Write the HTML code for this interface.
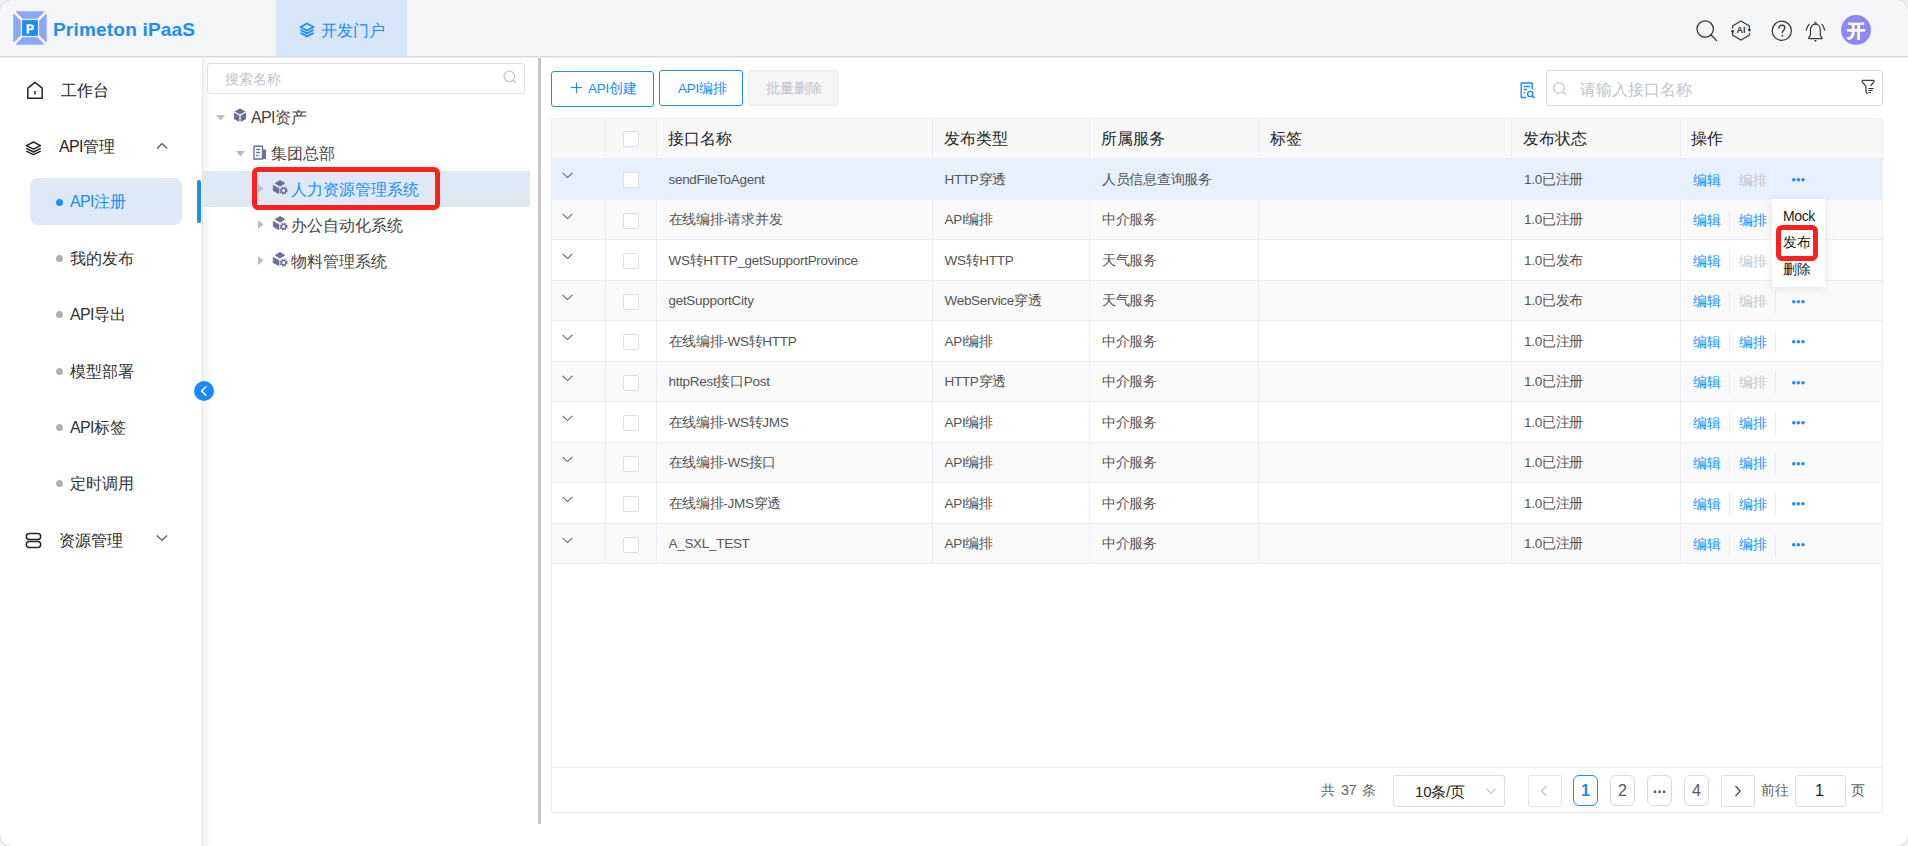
<!DOCTYPE html>
<html><head><meta charset="utf-8">
<style>
*{box-sizing:border-box;margin:0;padding:0}
html,body{width:1908px;height:846px;overflow:hidden;background:#fff}
body{font-family:"Liberation Sans",sans-serif;position:relative;color:#303133}
.a{position:absolute}
.t{position:absolute;white-space:nowrap}
svg{position:absolute;overflow:visible}
/* header */
#hdr{left:0;top:0;width:1908px;height:57px;background:#f4f5f7;border-bottom:1px solid #d9d9d9}
#side{left:0;top:57px;width:203px;height:789px;background:#fff;border-right:1px solid #e8e8e8}
.mi{font-size:16px;color:#262626;line-height:20px}
.sub{font-size:16px;color:#333;line-height:20px}
.dot{position:absolute;width:7px;height:7px;border-radius:50%;background:#b0b0b0}
.tr{font-size:16px;color:#454545;line-height:20px}
.th{font-size:16px;color:#262626;line-height:20px}
.td{font-size:13.5px;color:#555;line-height:18px;letter-spacing:-0.3px}
.hl{position:absolute;height:1px;background:#ebeef5}
.vl{position:absolute;width:1px;background:#ebeef5}
.cb{position:absolute;width:16px;height:16px;border:1px solid #dcdfe6;border-radius:2px;background:#fff}
.op{font-size:13.5px;color:#1890ff;line-height:18px}
.opd{color:#c8c8c8}
.sep{position:absolute;width:1px;height:22px;background:#ececec}
.pg{position:absolute;top:775px;width:25px;height:31px;border:1px solid #d9d9d9;border-radius:6px;font-size:16px;color:#555;text-align:center;line-height:29px;background:#fff}
</style></head><body>
<div id="hdr" class="a"></div>
<div id="side" class="a"></div>


<!-- SIDEBAR -->
<svg style="left:26px;top:81px" width="18" height="19" viewBox="0 0 18 19">
  <path d="M1.8 7.2L9 1.4 16.2 7.2V17.2H1.8z" fill="none" stroke="#262626" stroke-width="1.5" stroke-linejoin="round"/>
  <path d="M9 10V13.4" stroke="#262626" stroke-width="1.5"/>
</svg>
<div class="t mi" style="left:61px;top:81px">工作台</div>
<svg style="left:25px;top:141px" width="17" height="14" viewBox="0 0 17 14">
  <path d="M8.5 1L15.5 4.6 8.5 8.2 1.5 4.6z" fill="none" stroke="#262626" stroke-width="1.5" stroke-linejoin="round"/>
  <path d="M1.8 7.6L8.5 11 15.2 7.6M1.8 10.4L8.5 13.6 15.2 10.4" fill="none" stroke="#262626" stroke-width="1.5" stroke-linecap="round" stroke-linejoin="round"/>
</svg>
<div class="t mi" style="left:59px;top:137px"><span style="letter-spacing:-0.7px">API</span>管理</div>
<svg style="left:156px;top:142px" width="12" height="8" viewBox="0 0 12 8">
  <path d="M1 6.5L6 1.5 11 6.5" fill="none" stroke="#555" stroke-width="1.2"/>
</svg>
<div class="a" style="left:30px;top:178px;width:152px;height:47px;border-radius:8px;background:#dfe9f6"></div>
<div class="a" style="left:197px;top:180px;width:4px;height:43px;border-radius:2px;background:#1a8cff"></div>
<div class="dot" style="left:56px;top:199px;background:#1a8cff"></div>
<div class="t sub" style="left:70px;top:192px;color:#1a8cff"><span style="letter-spacing:-0.7px">API</span>注册</div>
<div class="dot" style="left:56px;top:255px"></div>
<div class="t sub" style="left:70px;top:249px">我的发布</div>
<div class="dot" style="left:56px;top:311px"></div>
<div class="t sub" style="left:70px;top:305px"><span style="letter-spacing:-0.7px">API</span>导出</div>
<div class="dot" style="left:56px;top:368px"></div>
<div class="t sub" style="left:70px;top:362px">模型部署</div>
<div class="dot" style="left:56px;top:424px"></div>
<div class="t sub" style="left:70px;top:418px"><span style="letter-spacing:-0.7px">API</span>标签</div>
<div class="dot" style="left:56px;top:480px"></div>
<div class="t sub" style="left:70px;top:474px">定时调用</div>
<svg style="left:25px;top:532px" width="17" height="17" viewBox="0 0 17 17">
  <rect x="1.3" y="1.5" width="14.4" height="6" rx="3" fill="none" stroke="#262626" stroke-width="1.5"/>
  <rect x="1.3" y="9.5" width="14.4" height="6" rx="3" fill="none" stroke="#262626" stroke-width="1.5"/>
</svg>
<div class="t mi" style="left:59px;top:531px">资源管理</div>
<svg style="left:156px;top:534px" width="12" height="8" viewBox="0 0 12 8">
  <path d="M1 1.5L6 6.5 11 1.5" fill="none" stroke="#555" stroke-width="1.2"/>
</svg>



<!-- TREE -->
<div class="a" style="left:203px;top:57px;width:8px;height:789px;background:linear-gradient(90deg,#f3f3f3,#fff)"></div>
<div class="a" style="left:207px;top:63px;width:318px;height:31px;border:1px solid #dcdfe6;border-radius:3px;background:#fff"></div>
<div class="t" style="left:225px;top:71px;font-size:14px;line-height:17px;color:#c0c4cc">搜索名称</div>
<svg style="left:503px;top:70px" width="14" height="14" viewBox="0 0 14 14">
  <circle cx="6.3" cy="6.3" r="5.3" fill="none" stroke="#b8bcc4" stroke-width="1.1"/>
  <path d="M10.2 10.2L12.6 12.6" stroke="#b8bcc4" stroke-width="1.1" stroke-linecap="round"/>
</svg>
<svg style="left:216px;top:115px" width="9" height="6" viewBox="0 0 9 6"><path d="M0 0H9L4.5 5.5z" fill="#b9bdc7"/></svg>
<svg style="left:233px;top:108px" width="14" height="14" viewBox="0 0 14 14"><path d="M7 0.6L12.6 3.6 7 6.6 1.4 3.6z M0.9 4.6L6.4 7.6V14L0.9 11z M13.1 4.6L7.6 7.6V14L13.1 11z" fill="#6b7094"/></svg>
<div class="t tr" style="left:251px;top:108px"><span style="letter-spacing:-0.7px">API</span>资产</div>
<svg style="left:236px;top:151px" width="9" height="6" viewBox="0 0 9 6"><path d="M0 0H9L4.5 5.5z" fill="#b9bdc7"/></svg>
<svg style="left:253px;top:145px" width="14" height="15" viewBox="0 0 14 15">
  <path d="M1 1.2H9.5V14H1z" fill="none" stroke="#6b7094" stroke-width="1.4"/>
  <path d="M9.8 4.5H13V14H9.8z" fill="#6b7094"/>
  <path d="M3.2 4.5H7M3.2 7.5H7M3.2 10.5H5.5" stroke="#6b7094" stroke-width="1.3"/>
</svg>
<div class="t tr" style="left:271px;top:144px">集团总部</div>
<div class="a" style="left:203px;top:171px;width:327px;height:36px;background:#dfe9f6"></div>
<svg style="left:258px;top:184px" width="6" height="9" viewBox="0 0 6 9"><path d="M0 0V9L5.5 4.5z" fill="#b9bdc7"/></svg>
<svg style="left:272px;top:180px" width="15" height="14" viewBox="0 0 15 14">
  <path d="M8 0.4L12.9 3.3 8 6.2 3.1 3.3z" fill="#6b7094" stroke="#6b7094" stroke-width="0.8" stroke-linejoin="round"/>
  <path d="M1.2 5.3L7 8.5V13.8L1.2 10.7z" fill="#6b7094" stroke="#6b7094" stroke-width="0.6" stroke-linejoin="round"/>
  <circle cx="11.6" cy="10.6" r="3.1" fill="none" stroke="#6b7094" stroke-width="1.8" stroke-dasharray="1.5 0.95"/>
  <circle cx="11.6" cy="10.6" r="2.2" fill="none" stroke="#6b7094" stroke-width="1.3"/>
</svg>
<div class="t tr" style="left:291px;top:180px;color:#1a8cff">人力资源管理系统</div>
<div class="a" style="left:252px;top:167px;width:188px;height:43px;border:5px solid #ff1f1f;border-radius:6px"></div>
<svg style="left:258px;top:220px" width="6" height="9" viewBox="0 0 6 9"><path d="M0 0V9L5.5 4.5z" fill="#b9bdc7"/></svg>
<svg style="left:272px;top:216px" width="15" height="14" viewBox="0 0 15 14">
  <path d="M8 0.4L12.9 3.3 8 6.2 3.1 3.3z" fill="#6b7094" stroke="#6b7094" stroke-width="0.8" stroke-linejoin="round"/>
  <path d="M1.2 5.3L7 8.5V13.8L1.2 10.7z" fill="#6b7094" stroke="#6b7094" stroke-width="0.6" stroke-linejoin="round"/>
  <circle cx="11.6" cy="10.6" r="3.1" fill="none" stroke="#6b7094" stroke-width="1.8" stroke-dasharray="1.5 0.95"/>
  <circle cx="11.6" cy="10.6" r="2.2" fill="none" stroke="#6b7094" stroke-width="1.3"/>
</svg>
<div class="t tr" style="left:291px;top:216px">办公自动化系统</div>
<svg style="left:258px;top:256px" width="6" height="9" viewBox="0 0 6 9"><path d="M0 0V9L5.5 4.5z" fill="#b9bdc7"/></svg>
<svg style="left:272px;top:252px" width="15" height="14" viewBox="0 0 15 14">
  <path d="M8 0.4L12.9 3.3 8 6.2 3.1 3.3z" fill="#6b7094" stroke="#6b7094" stroke-width="0.8" stroke-linejoin="round"/>
  <path d="M1.2 5.3L7 8.5V13.8L1.2 10.7z" fill="#6b7094" stroke="#6b7094" stroke-width="0.6" stroke-linejoin="round"/>
  <circle cx="11.6" cy="10.6" r="3.1" fill="none" stroke="#6b7094" stroke-width="1.8" stroke-dasharray="1.5 0.95"/>
  <circle cx="11.6" cy="10.6" r="2.2" fill="none" stroke="#6b7094" stroke-width="1.3"/>
</svg>
<div class="t tr" style="left:291px;top:252px">物料管理系统</div>
<div class="a" style="left:538px;top:58px;width:3px;height:766px;background:#c6c6c6"></div>


<!-- MAIN -->
<div class="a" style="left:551px;top:71px;width:103px;height:36px;border:1px solid #1a8cff;border-radius:3px;background:#fff"></div>
<svg style="left:571px;top:82px" width="11" height="11" viewBox="0 0 11 11"><path d="M5.5 0.5V11M0 5.5H11" stroke="#1a8cff" stroke-width="1.1"/></svg>
<div class="t" style="left:588px;top:80px;font-size:13.5px;line-height:17px;letter-spacing:-0.2px;color:#1a8cff">API创建</div>
<div class="a" style="left:659px;top:70px;width:84px;height:36px;border:1px solid #1a8cff;border-radius:3px;background:#fff"></div>
<div class="t" style="left:678px;top:80px;font-size:13.5px;line-height:17px;letter-spacing:-0.2px;color:#1a8cff">API编排</div>
<div class="a" style="left:748px;top:70px;width:90px;height:36px;border:1px solid #ececec;border-radius:3px;background:#f5f5f5"></div>
<div class="t" style="left:766px;top:80px;font-size:13.5px;line-height:17px;color:#c0c4cc">批量删除</div>
<svg style="left:1520px;top:82px" width="15" height="17" viewBox="0 0 15 17">
  <path d="M6.5 15.5H1.2V1H12.2V7.5" fill="none" stroke="#1a8cff" stroke-width="1.4" stroke-linejoin="round"/>
  <path d="M3.6 4.5H9.8M3.6 7.5H7M3.6 10.5H5.2" stroke="#1a8cff" stroke-width="1.4"/>
  <circle cx="10.2" cy="12" r="2.6" fill="none" stroke="#1a8cff" stroke-width="1.4"/>
  <path d="M12.1 13.9L14 15.8" stroke="#1a8cff" stroke-width="1.5" stroke-linecap="round"/>
</svg>
<div class="a" style="left:1546px;top:70px;width:337px;height:36px;border:1px solid #dcdcdc;border-radius:3px;background:#fff"></div>
<svg style="left:1553px;top:82px" width="14" height="13" viewBox="0 0 14 13">
  <circle cx="6" cy="6" r="5.2" fill="none" stroke="#c0c4cc" stroke-width="1.2"/>
  <path d="M9.8 9.8L12.6 12.4" stroke="#c0c4cc" stroke-width="1.2" stroke-linecap="round"/>
</svg>
<div class="t" style="left:1580px;top:80px;font-size:16px;line-height:19px;color:#c0c4cc">请输入接口名称</div>
<svg style="left:1860px;top:79px" width="16" height="17" viewBox="0 0 16 17">
  <path d="M3 1.3H13.2c.8 0 1.2.7.8 1.3L10.9 6.6M3 1.3C2.2 1.3 1.8 2 2.2 2.6L5.3 6.6C5.8 7.3 6 8 6 9V12.3C6 13.2 6.5 13.9 7.2 14.6" fill="none" stroke="#3c3c3c" stroke-width="1.3" stroke-linecap="round" stroke-linejoin="round"/>
  <path d="M8.4 9.5H13.8M8.4 11.5H12.6M8.4 13.5H11" stroke="#3c3c3c" stroke-width="1.2"/>
</svg>

<div class="a" style="left:551px;top:118px;width:1332px;height:40px;background:#f8f8f9"></div>
<div class="a" style="left:551px;top:159px;width:1332px;height:40px;background:#e8effd"></div>
<div class="a" style="left:551px;top:200px;width:1332px;height:39px;background:#fafafa"></div>
<div class="a" style="left:551px;top:281px;width:1332px;height:39px;background:#fafafa"></div>
<div class="a" style="left:551px;top:362px;width:1332px;height:39px;background:#fafafa"></div>
<div class="a" style="left:551px;top:443px;width:1332px;height:39px;background:#fafafa"></div>
<div class="a" style="left:551px;top:524px;width:1332px;height:39px;background:#fafafa"></div>
<div class="hl" style="left:551px;top:158px;width:1332px"></div>
<div class="hl" style="left:551px;top:199px;width:1332px"></div>
<div class="hl" style="left:551px;top:239px;width:1332px"></div>
<div class="hl" style="left:551px;top:280px;width:1332px"></div>
<div class="hl" style="left:551px;top:320px;width:1332px"></div>
<div class="hl" style="left:551px;top:361px;width:1332px"></div>
<div class="hl" style="left:551px;top:401px;width:1332px"></div>
<div class="hl" style="left:551px;top:442px;width:1332px"></div>
<div class="hl" style="left:551px;top:482px;width:1332px"></div>
<div class="hl" style="left:551px;top:523px;width:1332px"></div>
<div class="hl" style="left:551px;top:563px;width:1332px"></div>
<div class="hl" style="left:551px;top:118px;width:1332px"></div>
<div class="hl" style="left:551px;top:767px;width:1332px"></div>
<div class="hl" style="left:551px;top:812px;width:1332px"></div>
<div class="vl" style="left:605px;top:118px;height:445px"></div>
<div class="vl" style="left:656px;top:118px;height:445px"></div>
<div class="vl" style="left:932px;top:118px;height:445px"></div>
<div class="vl" style="left:1089px;top:118px;height:445px"></div>
<div class="vl" style="left:1258px;top:118px;height:445px"></div>
<div class="vl" style="left:1511px;top:118px;height:445px"></div>
<div class="vl" style="left:1680px;top:118px;height:445px"></div>
<div class="vl" style="left:551px;top:118px;height:695px"></div>
<div class="vl" style="left:1882px;top:118px;height:695px"></div>
<div class="cb" style="left:623px;top:131px"></div>
<div class="t th" style="left:668px;top:129px">接口名称</div>
<div class="t th" style="left:944px;top:129px">发布类型</div>
<div class="t th" style="left:1101px;top:129px">所属服务</div>
<div class="t th" style="left:1270px;top:129px">标签</div>
<div class="t th" style="left:1523px;top:129px">发布状态</div>
<div class="t th" style="left:1691px;top:129px">操作</div>
<svg style="left:562px;top:172.0px" width="11" height="7" viewBox="0 0 11 7"><path d="M0.6 0.8L5.5 5.6 10.4 0.8" fill="none" stroke="#666" stroke-width="1.1"/></svg>
<div class="cb" style="left:623px;top:172.0px"></div>
<div class="t td" style="left:668.5px;top:170.5px">sendFileToAgent</div>
<div class="t td" style="left:944.5px;top:170.5px">HTTP穿透</div>
<div class="t td" style="left:1102px;top:170.5px">人员信息查询服务</div>
<div class="t td" style="left:1524px;top:170.5px">1.0已注册</div>
<div class="t op" style="left:1693px;top:171.5px">编辑</div>
<div class="sep" style="left:1729px;top:169.0px"></div>
<div class="t op opd" style="left:1739px;top:171.5px">编排</div>
<div class="sep" style="left:1775px;top:169.0px"></div>
<svg style="left:1792px;top:178.0px" width="14" height="4" viewBox="0 0 14 4"><circle cx="1.75" cy="1.75" r="1.75" fill="#1a8cff"/><circle cx="6.35" cy="1.75" r="1.75" fill="#1a8cff"/><circle cx="10.95" cy="1.75" r="1.75" fill="#1a8cff"/></svg>
<svg style="left:562px;top:212.5px" width="11" height="7" viewBox="0 0 11 7"><path d="M0.6 0.8L5.5 5.6 10.4 0.8" fill="none" stroke="#666" stroke-width="1.1"/></svg>
<div class="cb" style="left:623px;top:212.5px"></div>
<div class="t td" style="left:668.5px;top:211.0px">在线编排-请求并发</div>
<div class="t td" style="left:944.5px;top:211.0px">API编排</div>
<div class="t td" style="left:1102px;top:211.0px">中介服务</div>
<div class="t td" style="left:1524px;top:211.0px">1.0已注册</div>
<div class="t op" style="left:1693px;top:212.0px">编辑</div>
<div class="sep" style="left:1729px;top:209.5px"></div>
<div class="t op" style="left:1739px;top:212.0px">编排</div>
<div class="sep" style="left:1775px;top:209.5px"></div>
<svg style="left:1792px;top:218.5px" width="14" height="4" viewBox="0 0 14 4"><circle cx="1.75" cy="1.75" r="1.75" fill="#1a8cff"/><circle cx="6.35" cy="1.75" r="1.75" fill="#1a8cff"/><circle cx="10.95" cy="1.75" r="1.75" fill="#1a8cff"/></svg>
<svg style="left:562px;top:253.0px" width="11" height="7" viewBox="0 0 11 7"><path d="M0.6 0.8L5.5 5.6 10.4 0.8" fill="none" stroke="#666" stroke-width="1.1"/></svg>
<div class="cb" style="left:623px;top:253.0px"></div>
<div class="t td" style="left:668.5px;top:251.5px">WS转HTTP_getSupportProvince</div>
<div class="t td" style="left:944.5px;top:251.5px">WS转HTTP</div>
<div class="t td" style="left:1102px;top:251.5px">天气服务</div>
<div class="t td" style="left:1524px;top:251.5px">1.0已发布</div>
<div class="t op" style="left:1693px;top:252.5px">编辑</div>
<div class="sep" style="left:1729px;top:250.0px"></div>
<div class="t op opd" style="left:1739px;top:252.5px">编排</div>
<div class="sep" style="left:1775px;top:250.0px"></div>
<svg style="left:1792px;top:259.0px" width="14" height="4" viewBox="0 0 14 4"><circle cx="1.75" cy="1.75" r="1.75" fill="#1a8cff"/><circle cx="6.35" cy="1.75" r="1.75" fill="#1a8cff"/><circle cx="10.95" cy="1.75" r="1.75" fill="#1a8cff"/></svg>
<svg style="left:562px;top:293.5px" width="11" height="7" viewBox="0 0 11 7"><path d="M0.6 0.8L5.5 5.6 10.4 0.8" fill="none" stroke="#666" stroke-width="1.1"/></svg>
<div class="cb" style="left:623px;top:293.5px"></div>
<div class="t td" style="left:668.5px;top:292.0px">getSupportCity</div>
<div class="t td" style="left:944.5px;top:292.0px">WebService穿透</div>
<div class="t td" style="left:1102px;top:292.0px">天气服务</div>
<div class="t td" style="left:1524px;top:292.0px">1.0已发布</div>
<div class="t op" style="left:1693px;top:293.0px">编辑</div>
<div class="sep" style="left:1729px;top:290.5px"></div>
<div class="t op opd" style="left:1739px;top:293.0px">编排</div>
<div class="sep" style="left:1775px;top:290.5px"></div>
<svg style="left:1792px;top:299.5px" width="14" height="4" viewBox="0 0 14 4"><circle cx="1.75" cy="1.75" r="1.75" fill="#1a8cff"/><circle cx="6.35" cy="1.75" r="1.75" fill="#1a8cff"/><circle cx="10.95" cy="1.75" r="1.75" fill="#1a8cff"/></svg>
<svg style="left:562px;top:334.0px" width="11" height="7" viewBox="0 0 11 7"><path d="M0.6 0.8L5.5 5.6 10.4 0.8" fill="none" stroke="#666" stroke-width="1.1"/></svg>
<div class="cb" style="left:623px;top:334.0px"></div>
<div class="t td" style="left:668.5px;top:332.5px">在线编排-WS转HTTP</div>
<div class="t td" style="left:944.5px;top:332.5px">API编排</div>
<div class="t td" style="left:1102px;top:332.5px">中介服务</div>
<div class="t td" style="left:1524px;top:332.5px">1.0已注册</div>
<div class="t op" style="left:1693px;top:333.5px">编辑</div>
<div class="sep" style="left:1729px;top:331.0px"></div>
<div class="t op" style="left:1739px;top:333.5px">编排</div>
<div class="sep" style="left:1775px;top:331.0px"></div>
<svg style="left:1792px;top:340.0px" width="14" height="4" viewBox="0 0 14 4"><circle cx="1.75" cy="1.75" r="1.75" fill="#1a8cff"/><circle cx="6.35" cy="1.75" r="1.75" fill="#1a8cff"/><circle cx="10.95" cy="1.75" r="1.75" fill="#1a8cff"/></svg>
<svg style="left:562px;top:374.5px" width="11" height="7" viewBox="0 0 11 7"><path d="M0.6 0.8L5.5 5.6 10.4 0.8" fill="none" stroke="#666" stroke-width="1.1"/></svg>
<div class="cb" style="left:623px;top:374.5px"></div>
<div class="t td" style="left:668.5px;top:373.0px">httpRest接口Post</div>
<div class="t td" style="left:944.5px;top:373.0px">HTTP穿透</div>
<div class="t td" style="left:1102px;top:373.0px">中介服务</div>
<div class="t td" style="left:1524px;top:373.0px">1.0已注册</div>
<div class="t op" style="left:1693px;top:374.0px">编辑</div>
<div class="sep" style="left:1729px;top:371.5px"></div>
<div class="t op opd" style="left:1739px;top:374.0px">编排</div>
<div class="sep" style="left:1775px;top:371.5px"></div>
<svg style="left:1792px;top:380.5px" width="14" height="4" viewBox="0 0 14 4"><circle cx="1.75" cy="1.75" r="1.75" fill="#1a8cff"/><circle cx="6.35" cy="1.75" r="1.75" fill="#1a8cff"/><circle cx="10.95" cy="1.75" r="1.75" fill="#1a8cff"/></svg>
<svg style="left:562px;top:415.0px" width="11" height="7" viewBox="0 0 11 7"><path d="M0.6 0.8L5.5 5.6 10.4 0.8" fill="none" stroke="#666" stroke-width="1.1"/></svg>
<div class="cb" style="left:623px;top:415.0px"></div>
<div class="t td" style="left:668.5px;top:413.5px">在线编排-WS转JMS</div>
<div class="t td" style="left:944.5px;top:413.5px">API编排</div>
<div class="t td" style="left:1102px;top:413.5px">中介服务</div>
<div class="t td" style="left:1524px;top:413.5px">1.0已注册</div>
<div class="t op" style="left:1693px;top:414.5px">编辑</div>
<div class="sep" style="left:1729px;top:412.0px"></div>
<div class="t op" style="left:1739px;top:414.5px">编排</div>
<div class="sep" style="left:1775px;top:412.0px"></div>
<svg style="left:1792px;top:421.0px" width="14" height="4" viewBox="0 0 14 4"><circle cx="1.75" cy="1.75" r="1.75" fill="#1a8cff"/><circle cx="6.35" cy="1.75" r="1.75" fill="#1a8cff"/><circle cx="10.95" cy="1.75" r="1.75" fill="#1a8cff"/></svg>
<svg style="left:562px;top:455.5px" width="11" height="7" viewBox="0 0 11 7"><path d="M0.6 0.8L5.5 5.6 10.4 0.8" fill="none" stroke="#666" stroke-width="1.1"/></svg>
<div class="cb" style="left:623px;top:455.5px"></div>
<div class="t td" style="left:668.5px;top:454.0px">在线编排-WS接口</div>
<div class="t td" style="left:944.5px;top:454.0px">API编排</div>
<div class="t td" style="left:1102px;top:454.0px">中介服务</div>
<div class="t td" style="left:1524px;top:454.0px">1.0已注册</div>
<div class="t op" style="left:1693px;top:455.0px">编辑</div>
<div class="sep" style="left:1729px;top:452.5px"></div>
<div class="t op" style="left:1739px;top:455.0px">编排</div>
<div class="sep" style="left:1775px;top:452.5px"></div>
<svg style="left:1792px;top:461.5px" width="14" height="4" viewBox="0 0 14 4"><circle cx="1.75" cy="1.75" r="1.75" fill="#1a8cff"/><circle cx="6.35" cy="1.75" r="1.75" fill="#1a8cff"/><circle cx="10.95" cy="1.75" r="1.75" fill="#1a8cff"/></svg>
<svg style="left:562px;top:496.0px" width="11" height="7" viewBox="0 0 11 7"><path d="M0.6 0.8L5.5 5.6 10.4 0.8" fill="none" stroke="#666" stroke-width="1.1"/></svg>
<div class="cb" style="left:623px;top:496.0px"></div>
<div class="t td" style="left:668.5px;top:494.5px">在线编排-JMS穿透</div>
<div class="t td" style="left:944.5px;top:494.5px">API编排</div>
<div class="t td" style="left:1102px;top:494.5px">中介服务</div>
<div class="t td" style="left:1524px;top:494.5px">1.0已注册</div>
<div class="t op" style="left:1693px;top:495.5px">编辑</div>
<div class="sep" style="left:1729px;top:493.0px"></div>
<div class="t op" style="left:1739px;top:495.5px">编排</div>
<div class="sep" style="left:1775px;top:493.0px"></div>
<svg style="left:1792px;top:502.0px" width="14" height="4" viewBox="0 0 14 4"><circle cx="1.75" cy="1.75" r="1.75" fill="#1a8cff"/><circle cx="6.35" cy="1.75" r="1.75" fill="#1a8cff"/><circle cx="10.95" cy="1.75" r="1.75" fill="#1a8cff"/></svg>
<svg style="left:562px;top:536.5px" width="11" height="7" viewBox="0 0 11 7"><path d="M0.6 0.8L5.5 5.6 10.4 0.8" fill="none" stroke="#666" stroke-width="1.1"/></svg>
<div class="cb" style="left:623px;top:536.5px"></div>
<div class="t td" style="left:668.5px;top:535.0px">A_SXL_TEST</div>
<div class="t td" style="left:944.5px;top:535.0px">API编排</div>
<div class="t td" style="left:1102px;top:535.0px">中介服务</div>
<div class="t td" style="left:1524px;top:535.0px">1.0已注册</div>
<div class="t op" style="left:1693px;top:536.0px">编辑</div>
<div class="sep" style="left:1729px;top:533.5px"></div>
<div class="t op" style="left:1739px;top:536.0px">编排</div>
<div class="sep" style="left:1775px;top:533.5px"></div>
<svg style="left:1792px;top:542.5px" width="14" height="4" viewBox="0 0 14 4"><circle cx="1.75" cy="1.75" r="1.75" fill="#1a8cff"/><circle cx="6.35" cy="1.75" r="1.75" fill="#1a8cff"/><circle cx="10.95" cy="1.75" r="1.75" fill="#1a8cff"/></svg>

<div class="a" style="left:1772px;top:199px;width:53px;height:88px;background:#fff;box-shadow:0 2px 10px rgba(0,0,0,0.10)"></div>
<div class="t" style="left:1783px;top:208px;font-size:14px;line-height:17px;color:#1a1a1a;letter-spacing:-0.4px">Mock</div>
<div class="t" style="left:1783px;top:234px;font-size:14px;line-height:17px;color:#1a1a1a">发布</div>
<div class="t" style="left:1783px;top:261px;font-size:14px;line-height:17px;color:#1a1a1a">删除</div>
<div class="a" style="left:1776px;top:225px;width:42px;height:35.5px;border:5px solid #ff1f1f;border-radius:6px"></div>


<div class="t" style="left:1321px;top:782px;font-size:14px;line-height:17px;color:#606266;word-spacing:2px">共 37 条</div>
<div class="a" style="left:1393px;top:775px;width:112px;height:32px;border:1px solid #dcdfe6;border-radius:3px;background:#fff"></div>
<div class="t" style="left:1415px;top:782px;font-size:15px;line-height:19px;color:#1f1f1f;letter-spacing:-0.2px">10条/页</div>
<svg style="left:1486px;top:788px" width="10" height="7" viewBox="0 0 10 7"><path d="M0.6 0.8L5 5.4 9.4 0.8" fill="none" stroke="#c0c4cc" stroke-width="1.1"/></svg>
<div class="a" style="left:1528px;top:775px;width:34px;height:32px;border:1px solid #e6e6e6;border-radius:2px;background:#fff"></div>
<svg style="left:1540px;top:785px" width="8" height="12" viewBox="0 0 8 12"><path d="M6.5 1L1.8 6 6.5 11" fill="none" stroke="#c8c8c8" stroke-width="1.2"/></svg>
<div class="pg" style="left:1573px;border-color:#1a8cff;color:#1a8cff;font-weight:bold">1</div>
<div class="pg" style="left:1610px">2</div>
<div class="pg" style="left:1647px;font-weight:bold;line-height:24px">...</div>
<div class="pg" style="left:1684px">4</div>
<div class="a" style="left:1721px;top:775px;width:34px;height:32px;border:1px solid #dcdfe6;border-radius:2px;background:#fff"></div>
<svg style="left:1734px;top:785px" width="8" height="12" viewBox="0 0 8 12"><path d="M1.5 1L6.2 6 1.5 11" fill="none" stroke="#444" stroke-width="1.2"/></svg>
<div class="t" style="left:1761px;top:782px;font-size:14px;line-height:17px;color:#606266">前往</div>
<div class="a" style="left:1795px;top:775px;width:51px;height:32px;border:1px solid #dcdfe6;border-radius:3px;background:#fff"></div>
<div class="t" style="left:1815px;top:781px;font-size:16px;line-height:19px;color:#1f1f1f">1</div>
<div class="t" style="left:1851px;top:782px;font-size:14px;line-height:17px;color:#606266">页</div>

<!-- HEADER -->
<div class="a" style="left:0;top:57px;width:1908px;height:1px;background:#eceef3"></div>
<svg style="left:13px;top:11px" width="34" height="34" viewBox="0 0 34 34">
  <rect x="0.3" y="0.3" width="33.4" height="33.4" rx="4.5" fill="#8aa6f7"/>
  <path d="M0 0L34 34M34 0L0 34" stroke="#f4f5f7" stroke-width="2.6"/>
  <rect x="7.8" y="7.8" width="18.4" height="18.4" fill="#f4f5f7"/>
  <rect x="9.1" y="9.1" width="15.8" height="15.8" fill="#1a8cff"/>
  <path d="M13.6 22.4V13.3h4c2.2 0 3.5 1.1 3.5 2.95s-1.3 2.95-3.5 2.95h-1.5v3.2z M16.1 15.2v2.2h1.3c.75 0 1.15-.4 1.15-1.1s-.4-1.1-1.15-1.1z" fill="#fff" fill-rule="evenodd"/>
</svg>
<div class="t" style="left:53px;top:19px;font-size:19px;font-weight:bold;color:#1a8cff;line-height:22px;letter-spacing:0.2px">Primeton iPaaS</div>
<div class="a" style="left:276px;top:0;width:131px;height:56px;background:#d6e6f8"></div>
<svg style="left:299px;top:22px" width="16" height="16" viewBox="0 0 16 16">
  <path d="M8 1.5L14.5 5 8 8.5 1.5 5z" fill="none" stroke="#1a8cff" stroke-width="1.8" stroke-linejoin="round"/>
  <path d="M2 8.2L8 11.4 14 8.2M2 11.2L8 14.4 14 11.2" fill="none" stroke="#1a8cff" stroke-width="1.8" stroke-linecap="round" stroke-linejoin="round"/>
</svg>
<div class="t" style="left:321px;top:21px;font-size:16px;color:#1a8cff;line-height:20px">开发门户</div>
<!-- right icons -->
<svg style="left:1696px;top:20px" width="22" height="22" viewBox="0 0 22 22">
  <circle cx="9.2" cy="9" r="8.2" fill="none" stroke="#333" stroke-width="1.25"/>
  <path d="M15.1 15L20.6 20.6" stroke="#333" stroke-width="1.35" stroke-linecap="round"/>
</svg>
<svg style="left:1731px;top:20px" width="20" height="21" viewBox="0 0 20 21">
  <path d="M18.4 10V5.9L10 1.1 1.6 5.9V8.6M1.6 11.3V15.3L10 20.1 18.4 15.3V13.1" fill="none" stroke="#333" stroke-width="1.15" stroke-linejoin="round"/>
  <circle cx="18.4" cy="10.1" r="1.35" fill="#333"/><circle cx="1.6" cy="11.3" r="1.35" fill="#333"/>
  <text x="9.9" y="13.3" font-family="Liberation Sans" font-weight="bold" font-size="9" text-anchor="middle" fill="#333">AI</text>
</svg>
<svg style="left:1771px;top:20px" width="22" height="22" viewBox="0 0 22 22">
  <circle cx="10.8" cy="10.8" r="9.6" fill="none" stroke="#333" stroke-width="1.2"/>
  <path d="M8 8.2c0-1.8 1.3-3 2.9-3s2.9 1.1 2.9 2.8c0 2.1-2.4 2.4-2.4 4.5" fill="none" stroke="#333" stroke-width="1.3" stroke-linecap="round"/>
  <circle cx="11.4" cy="15.6" r="0.95" fill="#333"/>
</svg>
<svg style="left:1805px;top:21px" width="21" height="22" viewBox="0 0 21 22">
  <path d="M10.4 3.2c-3 0-4.9 2.5-4.9 5.6v4.6c0 1.4-.6 2.2-1.6 3.1-.6.5-.3 1.2.4 1.2h12.2c.7 0 1-.7.4-1.2-1-.9-1.6-1.7-1.6-3.1V8.8c0-3.1-1.9-5.6-4.9-5.6z" fill="none" stroke="#333" stroke-width="1.2" stroke-linejoin="round"/>
  <path d="M8.9 19.1h3L10.4 20.8z" fill="#333"/>
  <circle cx="10.4" cy="2.1" r="1" fill="none" stroke="#333" stroke-width="0.9"/>
  <path d="M1.3 9.2c.3-2.2 1.3-4.2 2.8-5.8M19.6 9.2c-.3-2.2-1.3-4.2-2.8-5.8" fill="none" stroke="#333" stroke-width="1.1" stroke-linecap="round"/>
</svg>
<div class="a" style="left:1841px;top:15px;width:30px;height:30px;border-radius:50%;background:#8c87fa"></div>
<div class="t" style="left:1847px;top:21px;font-size:18px;font-weight:bold;color:#fff;line-height:20px;-webkit-text-stroke:0.5px #fff">开</div>

<!-- collapse button -->
<div class="a" style="left:194px;top:381px;width:20px;height:20px;border-radius:50%;background:#1a8cff"></div>
<svg style="left:194px;top:381px" width="20" height="20" viewBox="0 0 20 20">
  <path d="M11.8 5.8L7.6 10 11.8 14.2" fill="none" stroke="#fff" stroke-width="1.6" stroke-linecap="round" stroke-linejoin="round"/>
</svg>
<div class="a" style="left:0;top:0;width:1908px;height:846px;border-radius:12px;box-shadow:0 0 0 1px #dedede,0 0 0 40px #f2f2f2;pointer-events:none"></div>
</body></html>
